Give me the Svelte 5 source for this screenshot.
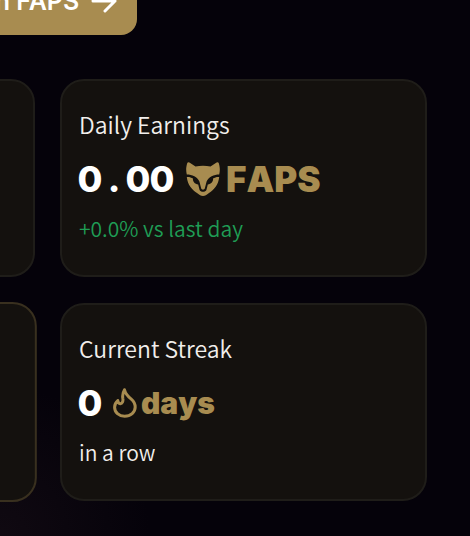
<script lang="ts">
    interface Stat {
        label: string;
        value: string;
        unit: string;
        icon: 'fox' | 'flame';
        note: string;
        positive?: boolean;
    }

    const earnings: Stat = {
        label: 'Daily Earnings',
        value: '0.00',
        unit: 'FAPS',
        icon: 'fox',
        note: '+0.0% vs last day',
        positive: true
    };

    const streak: Stat = {
        label: 'Current Streak',
        value: '0',
        unit: 'days',
        icon: 'flame',
        note: 'in a row'
    };
</script>

{#snippet statCard(stat: Stat)}
    <section class="card">
        <h2 class="label">{stat.label}</h2>
        <div class="value-row">
            <span class="value">
                {#each stat.value as digit}<span class="digit">{digit}</span>{/each}
            </span>
            {#if stat.icon === 'fox'}
                <svg class="fox" viewBox="0 0 34 34" aria-hidden="true">
                    <path d="M1.2 1.2C1.6-.2 3.2.1 4.2.9L9.5 4.5C14 3.6 20 3.6 24.5 4.5L29.8.9C30.8.1 32.4-.2 32.8 1.2C34.2 6 34 9 33.2 12.5C28 12.5 22.5 15 20.6 19.5L18.8 26.5C18.2 28 15.8 28 15.2 26.5L13.4 19.5C11.5 15 6 12.5.8 12.5C0 9-.2 6 1.2 1.2Z" />
                    <path d="M.8 15C3.2 14.8 5.2 15.4 7 16.6C6.4 19.6 9 22 12.2 22.6L13.6 28C14.4 30.4 19.6 30.4 20.4 28L21.8 22.6C25 22 27.6 19.6 27 16.6C28.8 15.4 30.8 14.8 33.2 15C32.4 23 28 27.5 23 31C20.5 33 19.2 34 17 34S13.5 33 11 31C6 27.5 1.6 23 .8 15Z" />
                </svg>
            {:else}
                <svg class="flame" viewBox="0 0 24 30" aria-hidden="true">
                    <path d="M11.5 1.8C10 4.2 9.3 7 9.8 10.2C10.4 13.2 9.2 16 7.2 15.8C5.5 15.6 5 14.2 4.8 12.6C2.7 14.4 1.6 16.7 1.6 19.2C1.6 24.4 5.9 28.2 11.6 28.2C17.7 28.2 22.2 24.2 22.2 19C22.2 15.6 20.8 13.2 18 10.8C14.8 8.2 12.4 5.6 11.5 1.8Z" />
                </svg>
            {/if}
            <span class="unit {stat.icon}-unit">{stat.unit}</span>
        </div>
        <p class="note" class:positive={stat.positive}>{stat.note}</p>
    </section>
{/snippet}

<main class="dashboard">
    <button class="earn" type="button">
        <span>Earn FAPS</span>
        <svg class="arrow" viewBox="0 0 26 24" aria-hidden="true">
            <path d="M2 12H24M14 2L24 12L14 22" />
        </svg>
    </button>

    <div class="stats">
        <section class="card"></section>
        {@render statCard(earnings)}
        <section class="card active"></section>
        {@render statCard(streak)}
    </div>
</main>

<style>
    :global(body) {
        margin: 0;
        background: #05020a;
    }

    .dashboard {
        box-sizing: border-box;
        overflow: hidden;
        padding: 0 43px 35px 0;
        background:
            radial-gradient(circle at 0 100%, rgba(32, 20, 28, 0.4), transparent 150px),
            #05020a;
        font-family: 'Noto Sans CJK SC', 'Noto Sans', sans-serif;
        color: #f2efec;
    }

    .earn {
        display: flex;
        align-items: center;
        gap: 12px;
        height: 68px;
        margin: -33px 0 0 -69px;
        padding: 0 20px 0 24px;
        border: 0;
        border-radius: 16px;
        background: #a88c50;
        color: #fff;
        font: 600 25px/30px Inter, sans-serif;
        white-space: nowrap;
    }

    .arrow {
        width: 26px;
        height: 24px;
        fill: none;
        stroke: currentColor;
        stroke-width: 3;
        stroke-linecap: round;
        stroke-linejoin: round;
    }

    .stats {
        display: grid;
        grid-template-columns: repeat(2, 1fr);
        gap: 26px 25px;
        margin: 44px 0 0 -332px;
    }

    .card {
        box-sizing: border-box;
        min-width: 0;
        padding: 25px 16px 29px 17px;
        border: 2px solid #1f1d19;
        border-radius: 24px;
        background: #14110e;
    }

    .active {
        border-color: #39301f;
        transform: scale(1.01);
    }

    .label,
    .note {
        margin: 0;
        font-weight: 350;
        line-height: 36px;
    }

    .label {
        font-size: 23px;
    }

    .note {
        font-size: 21px;
    }

    .value-row {
        display: flex;
        align-items: center;
        height: 48px;
        margin: 13px 0 7px;
        font-family: Inter, sans-serif;
        color: #a88c50;
    }

    .value {
        display: flex;
        margin-left: -1px;
        color: #fff;
        font-size: 36px;
        font-weight: 800;
    }

    .digit {
        display: flex;
        justify-content: center;
        width: 24px;
    }

    .fox {
        width: 34px;
        height: 34px;
        margin: 0 6px 0 12px;
        fill: currentColor;
    }

    .flame {
        width: 24px;
        height: 30px;
        margin: 0 4px 0 11px;
        fill: none;
        stroke: currentColor;
        stroke-width: 3;
        stroke-linejoin: round;
    }

    .unit {
        font-weight: 900;
        font-kerning: none;
    }

    .fox-unit {
        font-size: 35px;
    }

    .flame-unit {
        font-size: 30px;
    }

    .positive {
        color: #1f9d55;
    }
</style>
